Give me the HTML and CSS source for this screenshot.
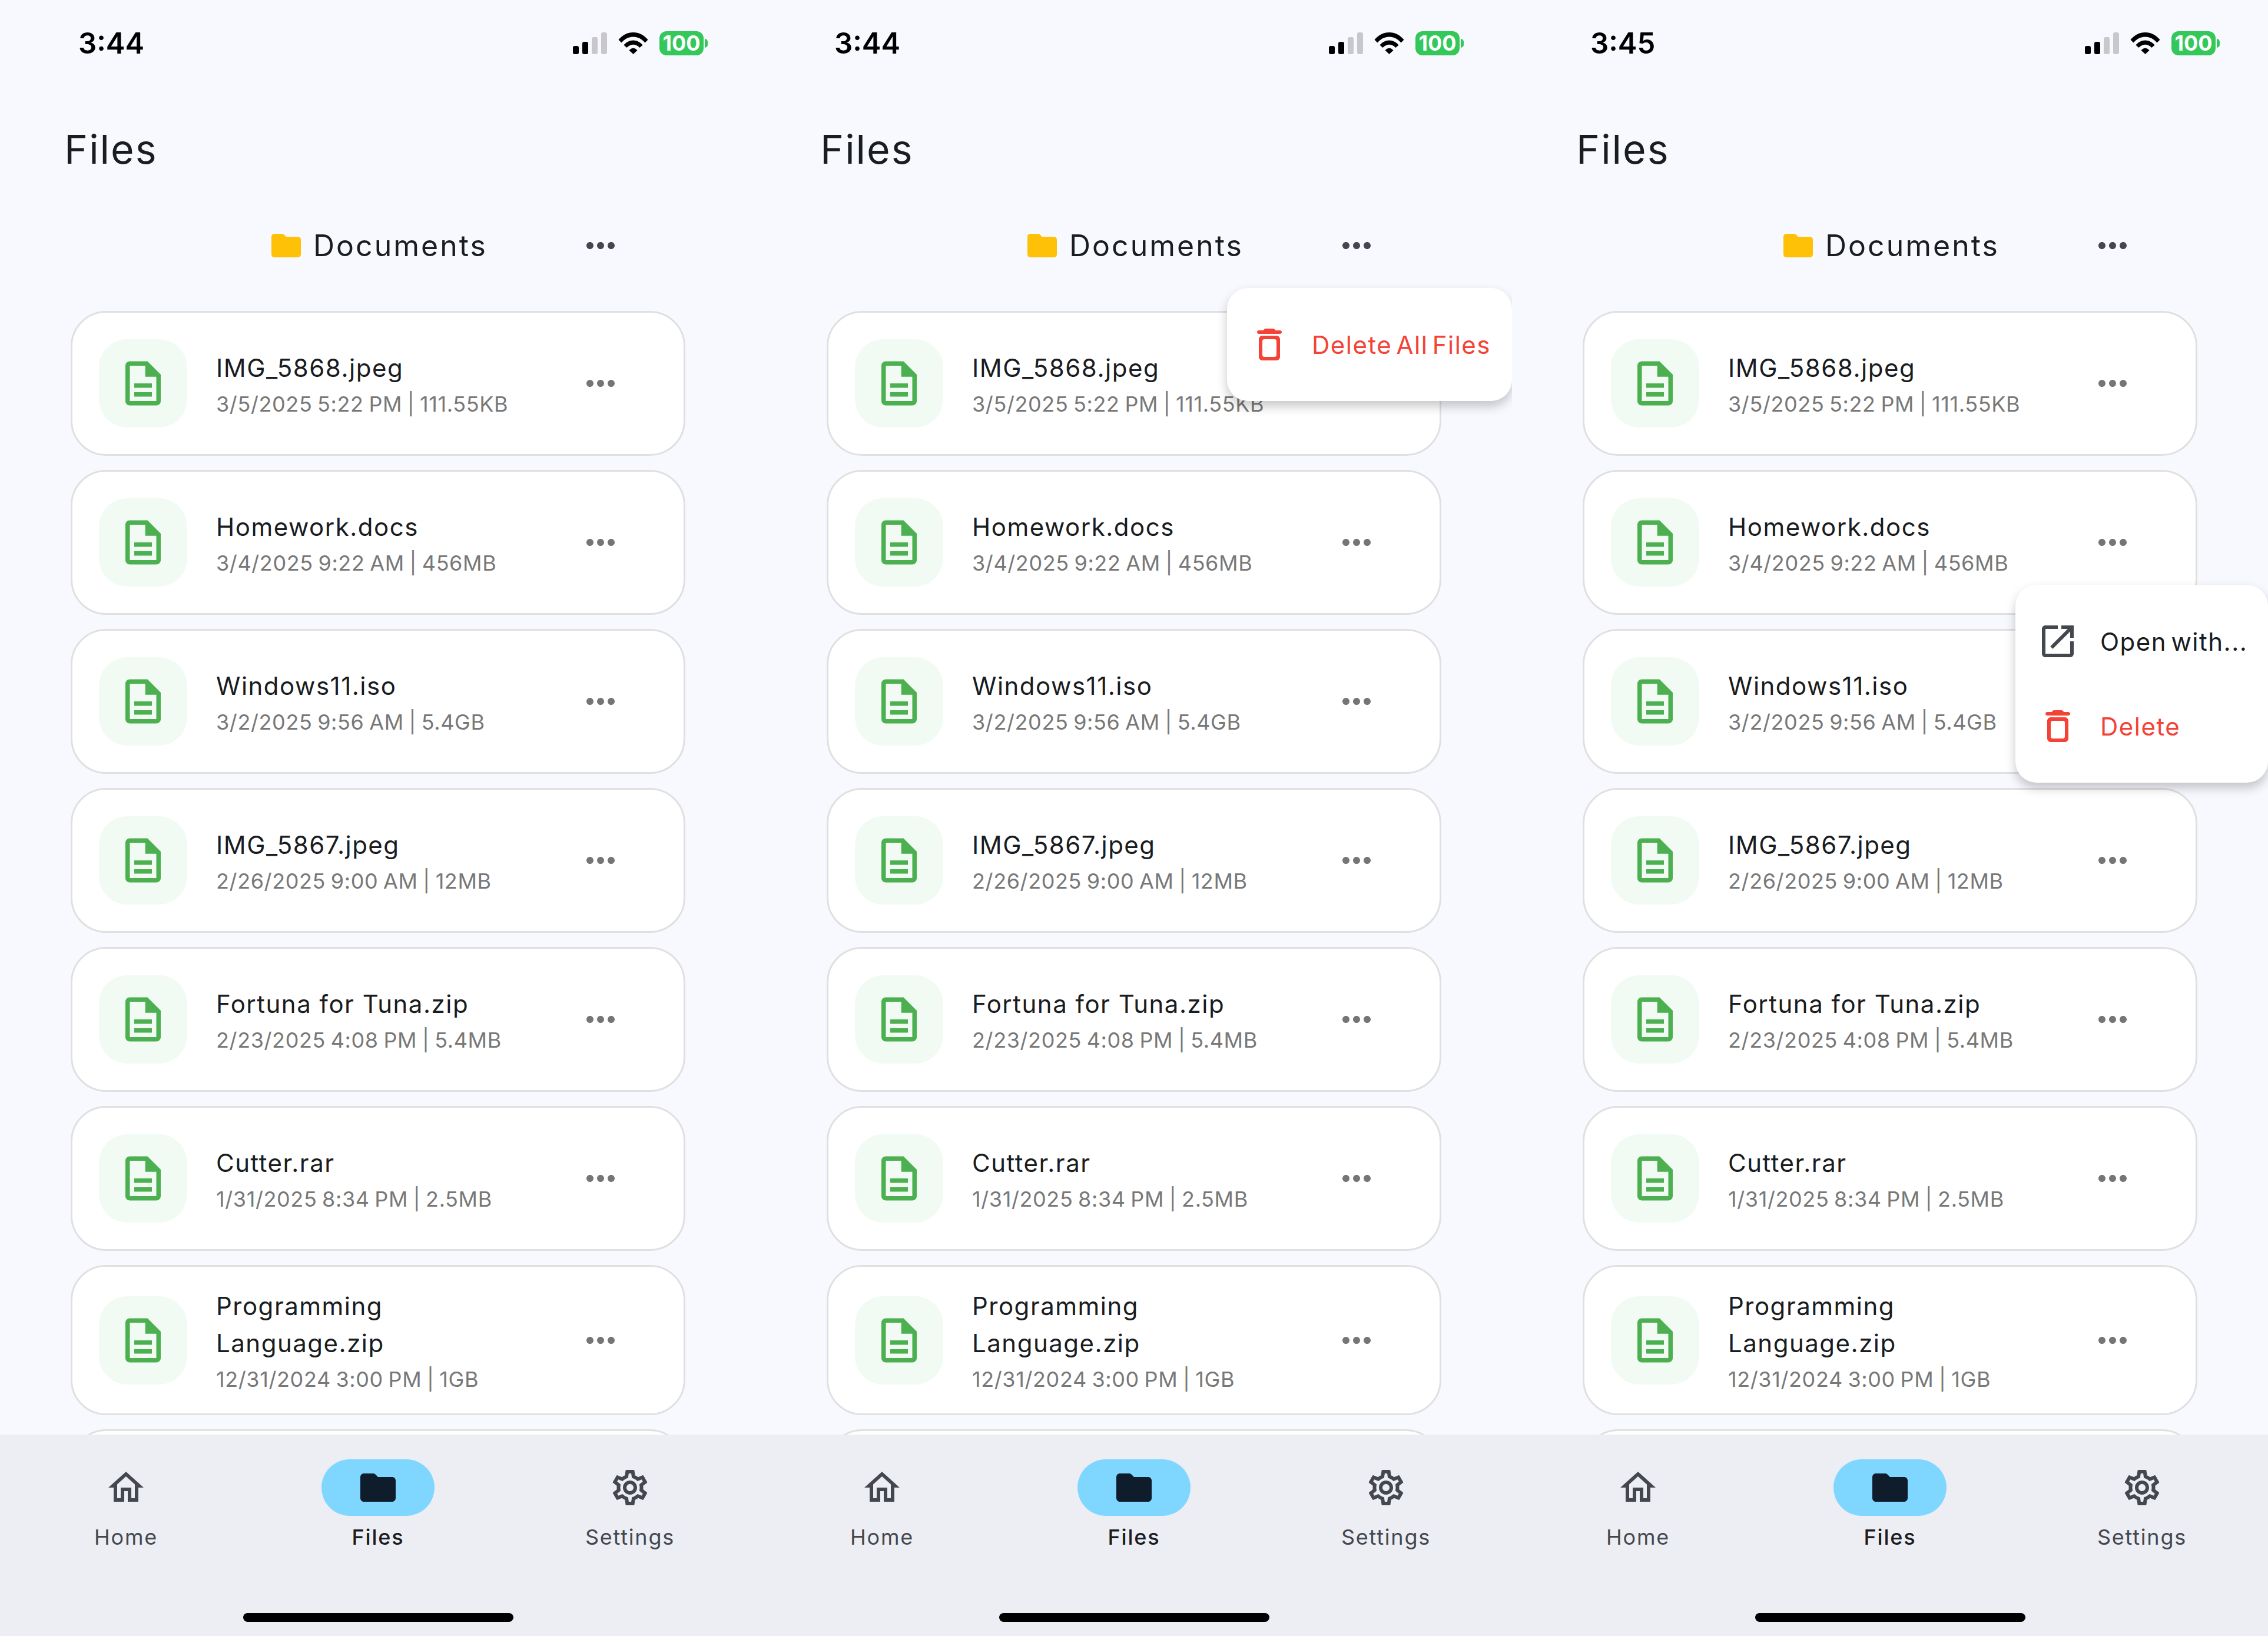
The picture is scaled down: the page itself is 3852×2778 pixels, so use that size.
FILE: index.html
```html
<!DOCTYPE html>
<html>
<head>
	<meta charset="UTF-8">
	<title>Files</title>
	<link rel="stylesheet" href="styles.css">
</head>
<body>
	<svg class="sprite" xmlns="http://www.w3.org/2000/svg">
		<symbol id="i-file" viewBox="0 0 24 24"><path d="M8 16h8v2H8zm0-4h8v2H8zm6-10H6c-1.1 0-2 .9-2 2v16c0 1.1.89 2 1.99 2H18c1.1 0 2-.9 2-2V8l-6-6zm4 18H6V4h7v5h5v11z"/></symbol>
		<symbol id="i-more" viewBox="0 0 24 24"><path d="M6 10c-1.1 0-2 .9-2 2s.9 2 2 2 2-.9 2-2-.9-2-2-2zm12 0c-1.1 0-2 .9-2 2s.9 2 2 2 2-.9 2-2-.9-2-2-2zm-6 0c-1.1 0-2 .9-2 2s.9 2 2 2 2-.9 2-2-.9-2-2-2z"/></symbol>
		<symbol id="i-folder" viewBox="0 0 24 24"><path d="M10.59 4.59C10.21 4.21 9.7 4 9.17 4H4c-1.1 0-2 .9-2 2v12c0 1.1.9 2 2 2h16c1.1 0 2-.9 2-2V8c0-1.1-.9-2-2-2h-8l-1.41-1.41z"/></symbol>
		<symbol id="i-home" viewBox="0 0 24 24"><path d="M12 5.69l5 4.5V18h-2v-6H9v6H7v-7.81l5-4.5M12 3L2 12h3v8h6v-6h2v6h6v-8h3L12 3z"/></symbol>
		<symbol id="i-gear" viewBox="0 0 24 24"><path d="M19.43 12.98c.04-.32.07-.64.07-.98 0-.34-.03-.66-.07-.98l2.11-1.65c.19-.15.24-.42.12-.64l-2-3.46c-.09-.16-.26-.25-.44-.25-.06 0-.12.01-.17.03l-2.49 1c-.52-.4-1.08-.73-1.69-.98l-.38-2.65C14.46 2.18 14.25 2 14 2h-4c-.25 0-.46.18-.49.42l-.38 2.65c-.61.25-1.17.59-1.69.98l-2.49-1c-.06-.02-.12-.03-.18-.03-.17 0-.34.09-.43.25l-2 3.46c-.13.22-.07.49.12.64l2.11 1.65c-.04.32-.07.65-.07.98 0 .33.03.66.07.98l-2.11 1.65c-.19.15-.24.42-.12.64l2 3.46c.09.16.26.25.44.25.06 0 .12-.01.17-.03l2.49-1c.52.4 1.08.73 1.69.98l.38 2.65c.03.24.24.42.49.42h4c.25 0 .46-.18.49-.42l.38-2.65c.61-.25 1.17-.59 1.69-.98l2.49 1c.06.02.12.03.18.03.17 0 .34-.09.43-.25l2-3.46c.12-.22.07-.49-.12-.64l-2.11-1.65zm-1.98-1.71c.04.31.05.52.05.73 0 .21-.02.43-.05.73l-.14 1.13.89.7 1.08.84-.7 1.21-1.27-.51-1.04-.42-.9.68c-.43.32-.84.56-1.25.73l-1.06.43-.16 1.13-.2 1.35h-1.4l-.19-1.35-.16-1.13-1.06-.43c-.43-.18-.83-.41-1.23-.71l-.91-.7-1.06.43-1.27.51-.7-1.21 1.08-.84.89-.7-.14-1.13c-.03-.31-.05-.54-.05-.74s.02-.43.05-.73l.14-1.13-.89-.7-1.08-.84.7-1.21 1.27.51 1.04.42.9-.68c.43-.32.84-.56 1.25-.73l1.06-.43.16-1.13.2-1.35h1.39l.19 1.35.16 1.13 1.06.43c.43.18.83.41 1.23.71l.91.7 1.06-.43 1.27-.51.7 1.21-1.07.85-.89.7.14 1.13zM12 8c-2.21 0-4 1.79-4 4s1.79 4 4 4 4-1.79 4-4-1.79-4-4-4zm0 6c-1.1 0-2-.9-2-2s.9-2 2-2 2 .9 2 2-.9 2-2 2z"/></symbol>
		<symbol id="i-trash" viewBox="0 0 24 24"><path d="M6 19c0 1.1.9 2 2 2h8c1.1 0 2-.9 2-2V9c0-1.1-.9-2-2-2H8c-1.1 0-2 .9-2 2v10zM9 9h6c.55 0 1 .45 1 1v8c0 .55-.45 1-1 1H9c-.55 0-1-.45-1-1v-8c0-.55.45-1 1-1zm6.5-5l-.71-.71c-.18-.18-.44-.29-.7-.29H9.91c-.26 0-.52.11-.7.29L8.5 4H6c-.55 0-1 .45-1 1s.45 1 1 1h12c.55 0 1-.45 1-1s-.45-1-1-1h-2.5z"/></symbol>
		<symbol id="i-open" viewBox="0 0 24 24"><path d="M19 19H5V5h7V3H5c-1.11 0-2 .9-2 2v14c0 1.1.89 2 2 2h14c1.1 0 2-.9 2-2v-7h-2v7zM14 3v2h3.59l-9.83 9.83 1.41 1.41L19 6.41V10h2V3h-7z"/></symbol>
		<symbol id="i-signal" viewBox="0 0 58 37"><rect y="23" width="10" height="14" rx="3"/><rect x="16" y="16" width="10" height="21" rx="3"/><rect class="off" x="32" y="8" width="10" height="29" rx="3"/><rect class="off" x="48" width="10" height="37" rx="3"/></symbol>
		<symbol id="i-wifi" viewBox="0 0 51 37"><path d="M.5 12.5C7 4.5 16 0 25.5 0S44 4.5 50.5 12.5L45.500 17.500C40 11 33 7.500 25.500 7.500S11 11 5.500 17.500ZM9.500 21.500C13.500 16.500 19.500 13.500 25.500 13.500S37.500 16.500 41.500 21.500L36.500 26C33.500 22.800 29.500 20.800 25.500 20.800S17.500 22.800 14.500 26ZM18.500 30.500C20.500 28.300 23 26.800 25.500 26.800S30.500 28.300 32.500 30.500L25.500 37Z"/></symbol>
	</svg>

	<div class="screens">

		<!-- phone 1 -->
		<section class="phone">
			<div class="status">
				<span class="time">3:44</span>
				<div class="status-icons">
					<svg class="signal"><use href="#i-signal"/></svg>
					<svg class="wifi"><use href="#i-wifi"/></svg>
					<span class="battery">100</span>
				</div>
			</div>
			<h1 class="title">Files</h1>
			<div class="folder-row">
				<div class="folder-name"><svg class="folder-icon"><use href="#i-folder"/></svg><span>Documents</span></div>
				<svg class="more more-dark"><use href="#i-more"/></svg>
			</div>
			<div class="list">
				<div class="card"><div class="file-box"><svg class="file-icon"><use href="#i-file"/></svg></div><div class="info"><div class="name">IMG_5868.jpeg</div><div class="meta">3/5/2025 5:22 PM | 111.55KB</div></div><svg class="more"><use href="#i-more"/></svg></div>
				<div class="card"><div class="file-box"><svg class="file-icon"><use href="#i-file"/></svg></div><div class="info"><div class="name">Homework.docs</div><div class="meta">3/4/2025 9:22 AM | 456MB</div></div><svg class="more"><use href="#i-more"/></svg></div>
				<div class="card"><div class="file-box"><svg class="file-icon"><use href="#i-file"/></svg></div><div class="info"><div class="name">Windows11.iso</div><div class="meta">3/2/2025 9:56 AM | 5.4GB</div></div><svg class="more"><use href="#i-more"/></svg></div>
				<div class="card"><div class="file-box"><svg class="file-icon"><use href="#i-file"/></svg></div><div class="info"><div class="name">IMG_5867.jpeg</div><div class="meta">2/26/2025 9:00 AM | 12MB</div></div><svg class="more"><use href="#i-more"/></svg></div>
				<div class="card"><div class="file-box"><svg class="file-icon"><use href="#i-file"/></svg></div><div class="info"><div class="name">Fortuna for Tuna.zip</div><div class="meta">2/23/2025 4:08 PM | 5.4MB</div></div><svg class="more"><use href="#i-more"/></svg></div>
				<div class="card"><div class="file-box"><svg class="file-icon"><use href="#i-file"/></svg></div><div class="info"><div class="name">Cutter.rar</div><div class="meta">1/31/2025 8:34 PM | 2.5MB</div></div><svg class="more"><use href="#i-more"/></svg></div>
				<div class="card"><div class="file-box"><svg class="file-icon"><use href="#i-file"/></svg></div><div class="info"><div class="name">Programming Language.zip</div><div class="meta">12/31/2024 3:00 PM | 1GB</div></div><svg class="more"><use href="#i-more"/></svg></div>
				<div class="card"></div>
			</div>
			<nav class="nav">
				<div class="nav-item"><div class="nav-icon"><svg><use href="#i-home"/></svg></div><span>Home</span></div>
				<div class="nav-item active"><div class="nav-icon"><svg><use href="#i-folder"/></svg></div><span>Files</span></div>
				<div class="nav-item"><div class="nav-icon"><svg><use href="#i-gear"/></svg></div><span>Settings</span></div>
				<div class="home-bar"></div>
			</nav>
		</section>

		<!-- phone 2 -->
		<section class="phone">
			<div class="status">
				<span class="time">3:44</span>
				<div class="status-icons">
					<svg class="signal"><use href="#i-signal"/></svg>
					<svg class="wifi"><use href="#i-wifi"/></svg>
					<span class="battery">100</span>
				</div>
			</div>
			<h1 class="title">Files</h1>
			<div class="folder-row">
				<div class="folder-name"><svg class="folder-icon"><use href="#i-folder"/></svg><span>Documents</span></div>
				<svg class="more more-dark"><use href="#i-more"/></svg>
			</div>
			<div class="list">
				<div class="card"><div class="file-box"><svg class="file-icon"><use href="#i-file"/></svg></div><div class="info"><div class="name">IMG_5868.jpeg</div><div class="meta">3/5/2025 5:22 PM | 111.55KB</div></div><svg class="more"><use href="#i-more"/></svg></div>
				<div class="card"><div class="file-box"><svg class="file-icon"><use href="#i-file"/></svg></div><div class="info"><div class="name">Homework.docs</div><div class="meta">3/4/2025 9:22 AM | 456MB</div></div><svg class="more"><use href="#i-more"/></svg></div>
				<div class="card"><div class="file-box"><svg class="file-icon"><use href="#i-file"/></svg></div><div class="info"><div class="name">Windows11.iso</div><div class="meta">3/2/2025 9:56 AM | 5.4GB</div></div><svg class="more"><use href="#i-more"/></svg></div>
				<div class="card"><div class="file-box"><svg class="file-icon"><use href="#i-file"/></svg></div><div class="info"><div class="name">IMG_5867.jpeg</div><div class="meta">2/26/2025 9:00 AM | 12MB</div></div><svg class="more"><use href="#i-more"/></svg></div>
				<div class="card"><div class="file-box"><svg class="file-icon"><use href="#i-file"/></svg></div><div class="info"><div class="name">Fortuna for Tuna.zip</div><div class="meta">2/23/2025 4:08 PM | 5.4MB</div></div><svg class="more"><use href="#i-more"/></svg></div>
				<div class="card"><div class="file-box"><svg class="file-icon"><use href="#i-file"/></svg></div><div class="info"><div class="name">Cutter.rar</div><div class="meta">1/31/2025 8:34 PM | 2.5MB</div></div><svg class="more"><use href="#i-more"/></svg></div>
				<div class="card"><div class="file-box"><svg class="file-icon"><use href="#i-file"/></svg></div><div class="info"><div class="name">Programming Language.zip</div><div class="meta">12/31/2024 3:00 PM | 1GB</div></div><svg class="more"><use href="#i-more"/></svg></div>
				<div class="card"></div>
			</div>
			<nav class="nav">
				<div class="nav-item"><div class="nav-icon"><svg><use href="#i-home"/></svg></div><span>Home</span></div>
				<div class="nav-item active"><div class="nav-icon"><svg><use href="#i-folder"/></svg></div><span>Files</span></div>
				<div class="nav-item"><div class="nav-icon"><svg><use href="#i-gear"/></svg></div><span>Settings</span></div>
				<div class="home-bar"></div>
			</nav>
			<div class="menu menu-all">
				<div class="menu-row danger"><svg><use href="#i-trash"/></svg><span>Delete All Files</span></div>
			</div>
		</section>

		<!-- phone 3 -->
		<section class="phone">
			<div class="status">
				<span class="time">3:45</span>
				<div class="status-icons">
					<svg class="signal"><use href="#i-signal"/></svg>
					<svg class="wifi"><use href="#i-wifi"/></svg>
					<span class="battery">100</span>
				</div>
			</div>
			<h1 class="title">Files</h1>
			<div class="folder-row">
				<div class="folder-name"><svg class="folder-icon"><use href="#i-folder"/></svg><span>Documents</span></div>
				<svg class="more more-dark"><use href="#i-more"/></svg>
			</div>
			<div class="list">
				<div class="card"><div class="file-box"><svg class="file-icon"><use href="#i-file"/></svg></div><div class="info"><div class="name">IMG_5868.jpeg</div><div class="meta">3/5/2025 5:22 PM | 111.55KB</div></div><svg class="more"><use href="#i-more"/></svg></div>
				<div class="card"><div class="file-box"><svg class="file-icon"><use href="#i-file"/></svg></div><div class="info"><div class="name">Homework.docs</div><div class="meta">3/4/2025 9:22 AM | 456MB</div></div><svg class="more"><use href="#i-more"/></svg></div>
				<div class="card"><div class="file-box"><svg class="file-icon"><use href="#i-file"/></svg></div><div class="info"><div class="name">Windows11.iso</div><div class="meta">3/2/2025 9:56 AM | 5.4GB</div></div><svg class="more"><use href="#i-more"/></svg></div>
				<div class="card"><div class="file-box"><svg class="file-icon"><use href="#i-file"/></svg></div><div class="info"><div class="name">IMG_5867.jpeg</div><div class="meta">2/26/2025 9:00 AM | 12MB</div></div><svg class="more"><use href="#i-more"/></svg></div>
				<div class="card"><div class="file-box"><svg class="file-icon"><use href="#i-file"/></svg></div><div class="info"><div class="name">Fortuna for Tuna.zip</div><div class="meta">2/23/2025 4:08 PM | 5.4MB</div></div><svg class="more"><use href="#i-more"/></svg></div>
				<div class="card"><div class="file-box"><svg class="file-icon"><use href="#i-file"/></svg></div><div class="info"><div class="name">Cutter.rar</div><div class="meta">1/31/2025 8:34 PM | 2.5MB</div></div><svg class="more"><use href="#i-more"/></svg></div>
				<div class="card"><div class="file-box"><svg class="file-icon"><use href="#i-file"/></svg></div><div class="info"><div class="name">Programming Language.zip</div><div class="meta">12/31/2024 3:00 PM | 1GB</div></div><svg class="more"><use href="#i-more"/></svg></div>
				<div class="card"></div>
			</div>
			<nav class="nav">
				<div class="nav-item"><div class="nav-icon"><svg><use href="#i-home"/></svg></div><span>Home</span></div>
				<div class="nav-item active"><div class="nav-icon"><svg><use href="#i-folder"/></svg></div><span>Files</span></div>
				<div class="nav-item"><div class="nav-icon"><svg><use href="#i-gear"/></svg></div><span>Settings</span></div>
				<div class="home-bar"></div>
			</nav>
			<div class="menu menu-file">
				<div class="menu-row"><svg><use href="#i-open"/></svg><span>Open with...</span></div>
				<div class="menu-row danger"><svg><use href="#i-trash"/></svg><span>Delete</span></div>
			</div>
		</section>

	</div>
</body>
</html>
```

FILE: styles.css
```css
body {
	font-family: Inter, "Noto Sans", sans-serif;
	margin: 0;
	padding: 0;
	background-color: #f8f9ff;
	color: #191c20;
}

.sprite {
	display: none;
}

.screens {
	display: grid;
	grid-template-columns: repeat(3, 1284px);
}

.phone {
	position: relative;
	display: flex;
	flex-direction: column;
	height: 2778px;
	overflow: hidden;
}

/* status bar */

.status {
	flex: none;
	display: flex;
	align-items: center;
	justify-content: space-between;
	height: 147px;
	padding: 0 89px 0 133px;
}

.time {
	font-size: 49px;
	font-weight: 600;
	color: #000;
}

.status-icons {
	display: flex;
	align-items: center;
}

.signal {
	width: 58px;
	height: 37px;
	margin-right: 19px;
	fill: #000;
}

.signal .off,
#i-signal .off {
	fill: #c7c7cc;
}

.wifi {
	width: 51px;
	height: 37px;
	margin-right: 19px;
	fill: #000;
}

.battery {
	position: relative;
	width: 75px;
	height: 41px;
	border-radius: 12px;
	background-color: #34c759;
	color: #fff;
	font-size: 36px;
	font-weight: 700;
	line-height: 41px;
	text-align: center;
}

.battery::after {
	content: "";
	position: absolute;
	left: 77px;
	top: 13px;
	width: 5px;
	height: 15px;
	border-radius: 0 8px 8px 0;
	background-color: #34c759;
}

/* headings */

.title {
	flex: none;
	height: 213px;
	margin: 0;
	padding-left: 109px;
	font-size: 68px;
	font-weight: 400;
	line-height: 213px;
	letter-spacing: 2px;
}

.folder-row {
	flex: none;
	display: grid;
	grid-template-columns: 1fr auto 1fr;
	align-items: center;
	height: 114px;
	padding: 0 228px;
}

.folder-name {
	grid-column: 2;
	display: flex;
	align-items: center;
	gap: 16px;
	font-size: 50px;
	letter-spacing: 3px;
}

.folder-icon {
	width: 60px;
	height: 60px;
	fill: #ffc107;
}

.more {
	flex: none;
	width: 72px;
	height: 72px;
	margin-left: auto;
	fill: #757575;
}

.more-dark {
	grid-column: 3;
	fill: #44474e;
}

/* file list */

.list {
	flex: 1;
	min-height: 0;
	display: flex;
	flex-direction: column;
	gap: 24px;
	padding: 54px 120px 0;
	overflow: hidden;
}

.card {
	flex: none;
	box-sizing: border-box;
	display: flex;
	align-items: center;
	min-height: 246px;
	padding: 34.5px 105px 34.5px 45px;
	border: 3px solid #e0e0e0;
	border-radius: 60px;
	background-color: #fff;
}

.file-box {
	flex: none;
	display: flex;
	align-items: center;
	justify-content: center;
	width: 150px;
	height: 150px;
	margin-right: 49px;
	border-radius: 48px;
	background-color: #f1fbf4;
}

.file-icon {
	width: 90px;
	height: 90px;
	fill: #4caf50;
}

.info {
	max-width: 560px;
}

.name {
	font-size: 42px;
	line-height: 63px;
	letter-spacing: 1.5px;
}

.meta {
	margin-top: 6px;
	font-size: 36px;
	line-height: 48px;
	letter-spacing: 0.6px;
	word-spacing: -2px;
	color: #787878;
}

/* bottom navigation */

.nav {
	flex: none;
	position: relative;
	display: grid;
	grid-template-columns: repeat(3, 1fr);
	height: 342px;
	box-sizing: border-box;
	padding-top: 42px;
	background-color: #eceef4;
}

.nav-item {
	display: flex;
	flex-direction: column;
	align-items: center;
	gap: 12px;
	font-size: 36px;
	line-height: 48px;
	letter-spacing: 1.8px;
	color: #44474e;
}

.nav-icon {
	display: flex;
	align-items: center;
	justify-content: center;
	width: 192px;
	height: 96px;
	border-radius: 48px;
}

.nav-icon svg {
	width: 72px;
	height: 72px;
	fill: #44474e;
}

.nav-item.active {
	color: #191c20;
	font-weight: 500;
}

.active .nav-icon {
	background-color: #7fd6ff;
}

.active .nav-icon svg {
	fill: #0f1c2c;
}

.home-bar {
	position: absolute;
	left: 413px;
	bottom: 24px;
	width: 459px;
	height: 15px;
	border-radius: 8px;
	background-color: #000;
}

/* popup menus */

.menu {
	position: absolute;
	right: 0;
	padding: 24px 0;
	border-radius: 36px;
	background-color: #fff;
	box-shadow: 0 9px 18px rgba(0, 0, 0, 0.22);
}

.menu-all {
	top: 489px;
}

.menu-file {
	top: 993px;
	width: 429px;
}

.menu-row {
	display: flex;
	align-items: center;
	gap: 36px;
	height: 144px;
	padding: 0 36px;
	font-size: 42px;
	letter-spacing: 1.5px;
	word-spacing: -6px;
	white-space: nowrap;
}

.menu-row svg {
	flex: none;
	width: 72px;
	height: 72px;
	fill: #44474e;
}

.danger {
	color: #f44336;
}

.danger svg {
	fill: #f44336;
}
```
